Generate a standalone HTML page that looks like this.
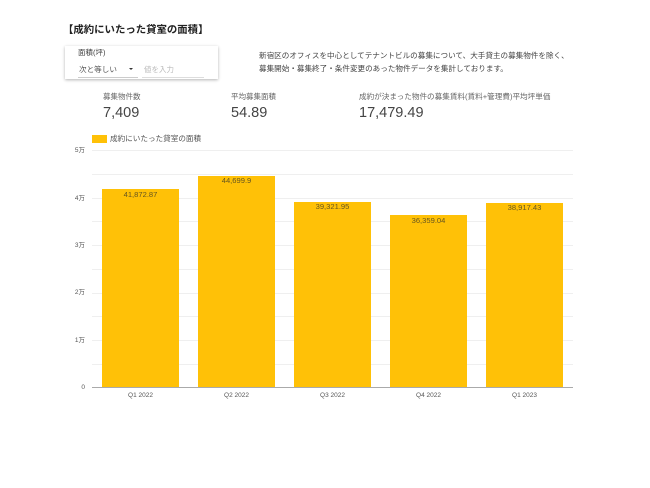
<!DOCTYPE html>
<html lang="ja">
<head>
<meta charset="utf-8">
<style>
html,body{margin:0;padding:0;background:#fff;}
body{width:650px;height:488px;position:relative;overflow:hidden;font-family:"Liberation Sans","Noto Sans CJK JP",sans-serif;color:#333;}
#w{position:absolute;left:0;top:0;width:650px;height:488px;filter:blur(.3px);}
.t{position:absolute;white-space:nowrap;line-height:1;}
.g{position:absolute;left:92px;width:481px;height:1.4px;background:#efefef;}
.b{position:absolute;background:#ffc107;width:77px;}
.v{position:absolute;width:77px;text-align:center;font-size:7.6px;color:#665620;line-height:1;white-space:nowrap;}
.x{position:absolute;width:77px;text-align:center;font-size:6.5px;color:#555;line-height:1;top:392.5px;white-space:nowrap;}
.y{position:absolute;right:565px;font-size:6.5px;color:#555;line-height:1;white-space:nowrap;}
</style>
</head>
<body>
<div id="w">
<div class="t" style="left:63px;top:26px;font-size:10.4px;font-weight:bold;color:#222;">【成約にいたった貸室の面積】</div>

<div style="position:absolute;left:65px;top:46px;width:153px;height:33px;background:#fff;box-shadow:0 1px 3px rgba(0,0,0,.3);"></div>
<div class="t" style="left:78px;top:49px;font-size:7.5px;color:#444;">面積(坪)</div>
<div class="t" style="left:79px;top:65.5px;font-size:7.6px;color:#555;">次と等しい</div>
<div style="position:absolute;left:128.5px;top:68px;width:0;height:0;border-left:2.5px solid transparent;border-right:2.5px solid transparent;border-top:2.5px solid #333;"></div>
<div style="position:absolute;left:78px;top:77px;width:60px;height:1px;background:#ccc;"></div>
<div class="t" style="left:144px;top:65.5px;font-size:7.5px;color:#bbb;">値を入力</div>
<div style="position:absolute;left:142px;top:77px;width:62px;height:1px;background:#ddd;"></div>

<div class="t" style="left:259px;top:52px;font-size:7.58px;color:#444;">新宿区のオフィスを中心としてテナントビルの募集について、大手貸主の募集物件を除く、</div>
<div class="t" style="left:259px;top:64.5px;font-size:7.58px;color:#444;">募集開始・募集終了・条件変更のあった物件データを集計しております。</div>

<div class="t" style="left:103px;top:93px;font-size:7.5px;color:#666;">募集物件数</div>
<div class="t" style="left:103px;top:105.5px;font-size:14.5px;color:#444;">7,409</div>
<div class="t" style="left:231px;top:93px;font-size:7.5px;color:#666;">平均募集面積</div>
<div class="t" style="left:231px;top:105.5px;font-size:14.5px;color:#444;">54.89</div>
<div class="t" style="left:359px;top:92.5px;font-size:7.6px;color:#666;">成約が決まった物件の募集賃料(賃料+管理費)平均坪単価</div>
<div class="t" style="left:359px;top:105.5px;font-size:14.5px;color:#444;">17,479.49</div>

<div style="position:absolute;left:92px;top:135px;width:15px;height:8px;background:#ffc107;"></div>
<div class="t" style="left:110px;top:135px;font-size:7.6px;color:#555;">成約にいたった貸室の面積</div>

<div class="g" style="top:150px;"></div>
<div class="g" style="top:174px;"></div>
<div class="g" style="top:197.5px;"></div>
<div class="g" style="top:221px;"></div>
<div class="g" style="top:245px;"></div>
<div class="g" style="top:269px;"></div>
<div class="g" style="top:292.5px;"></div>
<div class="g" style="top:316px;"></div>
<div class="g" style="top:340px;"></div>
<div class="g" style="top:364px;"></div>

<div class="y" style="top:147.5px;">5万</div>
<div class="y" style="top:195.5px;">4万</div>
<div class="y" style="top:242.5px;">3万</div>
<div class="y" style="top:290px;">2万</div>
<div class="y" style="top:337.5px;">1万</div>
<div class="y" style="top:385px;">0</div>

<div class="b" style="left:102px;top:189px;height:198px;"></div>
<div class="b" style="left:198px;top:175.5px;height:211.5px;"></div>
<div class="b" style="left:294px;top:201.5px;height:185.5px;"></div>
<div class="b" style="left:390px;top:215px;height:172px;"></div>
<div class="b" style="left:486px;top:203px;height:184px;"></div>

<div class="v" style="left:102px;top:190.5px;">41,872.87</div>
<div class="v" style="left:198px;top:176.5px;">44,699.9</div>
<div class="v" style="left:294px;top:202.5px;">39,321.95</div>
<div class="v" style="left:390px;top:216.5px;">36,359.04</div>
<div class="v" style="left:486px;top:204px;">38,917.43</div>

<div style="position:absolute;left:92px;top:387px;width:481px;height:1.2px;background:#aaa;"></div>

<div class="x" style="left:102px;">Q1 2022</div>
<div class="x" style="left:198px;">Q2 2022</div>
<div class="x" style="left:294px;">Q3 2022</div>
<div class="x" style="left:390px;">Q4 2022</div>
<div class="x" style="left:486px;">Q1 2023</div>
</div>
</body>
</html>
